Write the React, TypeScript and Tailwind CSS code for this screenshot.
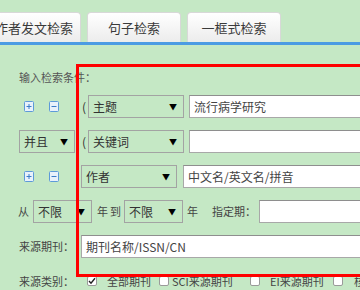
import React from "react";

const font = "font-['Noto_Sans_CJK_SC','Noto_Sans',sans-serif]";

function PlusIcon({ minus = false }: { minus?: boolean }) {
  return (
    <svg width="10" height="11" viewBox="0 0 10 11" className="shrink-0">
      <rect x="0.5" y="0.5" width="9" height="10" rx="1" fill="#e9f1fb" stroke="#5d9ad8" />
      <line x1="2.5" y1="5.5" x2="7.5" y2="5.5" stroke="#3a7cc8" strokeWidth="1" />
      {!minus && <line x1="5" y1="3" x2="5" y2="8" stroke="#3a7cc8" strokeWidth="1" />}
    </svg>
  );
}

function Sel({ text, w, cls = "" }: { text: string; w: string; cls?: string }) {
  return (
    <div
      className={`${w} ${cls} h-[23px] shrink-0 border border-[#a3a3a3] flex items-center justify-between pl-[4px] pr-[6px] text-[12px] text-[#333] whitespace-nowrap`}
    >
      <span>{text}</span>
      <span className="text-[8px] text-black leading-none">▼</span>
    </div>
  );
}

function Inp({ text = "", cls = "" }: { text?: string; cls?: string }) {
  return (
    <div
      className={`${cls} h-[23px] w-[300px] shrink-0 bg-white border border-[#a8a8a8] border-t-[#8e8e8e] flex items-center pl-[4px] text-[12px] text-[#444] whitespace-nowrap`}
    >
      {text}
    </div>
  );
}

function Cb({ checked = false }: { checked?: boolean }) {
  return (
    <div className="w-[10px] h-[10px] shrink-0 bg-white border border-[#9a9a9a] rounded-[2px] flex items-center justify-center">
      {checked && (
        <svg width="8" height="8" viewBox="0 0 8 8">
          <path d="M1 4 L3 6.2 L7 1.2" fill="none" stroke="#222" strokeWidth="1.4" />
        </svg>
      )}
    </div>
  );
}

function Tab({ text }: { text: string }) {
  return (
    <div className="w-[94px] h-[30px] shrink-0 rounded-t-[4px] border border-b-0 border-[#d8d8d8] bg-gradient-to-b from-white to-[#ececec] flex items-center justify-center text-[13px] text-[#3a3a3a] whitespace-nowrap">
      {text}
    </div>
  );
}

const T = "shrink-0 whitespace-nowrap";

export default function App() {
  return (
    <div className={`relative w-[360px] h-[290px] overflow-hidden bg-[#c5e8c5] ${font}`}>
      <div className="pt-[12px] flex gap-[6px] ml-[-13px]">
        <Tab text="作者发文检索" />
        <Tab text="句子检索" />
        <Tab text="一框式检索" />
      </div>
      <div className="h-[3px] bg-[#4b9be3]" />

      <div className="pl-[19px] mt-[24px] text-[11px] leading-[16px] text-[#555]">输入检索条件：</div>

      <div className="mt-[10px] flex flex-col gap-[12px] text-[11px] text-[#444]">
        {/* row 1 */}
        <div className="flex items-center h-[23px]">
          <div className="ml-[24px] shrink-0"><PlusIcon /></div>
          <div className="ml-[15px] shrink-0"><PlusIcon minus /></div>
          <span className={`ml-[23px] w-[6px] text-[12px] text-[#333] ${T}`}>(</span>
          <Sel text="主题" w="w-[96px]" />
          <Inp text="流行病学研究" cls="ml-[5px]" />
        </div>
        {/* row 2 */}
        <div className="flex items-center h-[23px]">
          <Sel text="并且" w="w-[56px]" cls="ml-[19px]" />
          <span className={`ml-[7px] w-[6px] text-[12px] text-[#333] ${T}`}>(</span>
          <Sel text="关键词" w="w-[96px]" />
          <Inp cls="ml-[5px]" />
        </div>
        {/* row 3 */}
        <div className="flex items-center h-[23px]">
          <div className="ml-[24px] shrink-0"><PlusIcon /></div>
          <div className="ml-[15px] shrink-0"><PlusIcon minus /></div>
          <Sel text="作者" w="w-[96px]" cls="ml-[22px]" />
          <Inp text="中文名/英文名/拼音" cls="ml-[6px]" />
        </div>
        {/* row 4 */}
        <div className="flex items-center h-[23px]">
          <span className={`ml-[18px] w-[15px] ${T}`}>从</span>
          <Sel text="不限" w="w-[59px]" />
          <span className={`ml-[5px] w-[13px] ${T}`}>年</span>
          <span className={`w-[14px] ${T}`}>到</span>
          <Sel text="不限" w="w-[59px]" />
          <span className={`ml-[4px] w-[25px] ${T}`}>年</span>
          <span className={`w-[47px] ${T}`}>指定期：</span>
          <Inp />
        </div>
        {/* row 5 */}
        <div className="flex items-center h-[23px]">
          <span className={`ml-[19px] w-[62px] ${T}`}>来源期刊：</span>
          <Inp text="期刊名称/ISSN/CN" />
        </div>
        {/* row 6 */}
        <div className="flex items-center h-[16px] mt-[3px]">
          <span className={`ml-[19px] w-[68px] ${T}`}>来源类别：</span>
          <Cb checked />
          <span className={`ml-[10px] w-[52px] ${T}`}>全部期刊</span>
          <Cb />
          <span className={`ml-[3px] w-[78px] ${T}`}>SCI来源期刊</span>
          <Cb />
          <span className={`ml-[10px] w-[63px] ${T}`}>EI来源期刊</span>
          <Cb />
          <span className={`ml-[11px] ${T}`}>核心期刊</span>
        </div>
      </div>

      <div className="absolute left-[76px] top-[64px] w-[320px] h-[213px] border-[3px] border-[#ff0000] pointer-events-none" />
    </div>
  );
}
